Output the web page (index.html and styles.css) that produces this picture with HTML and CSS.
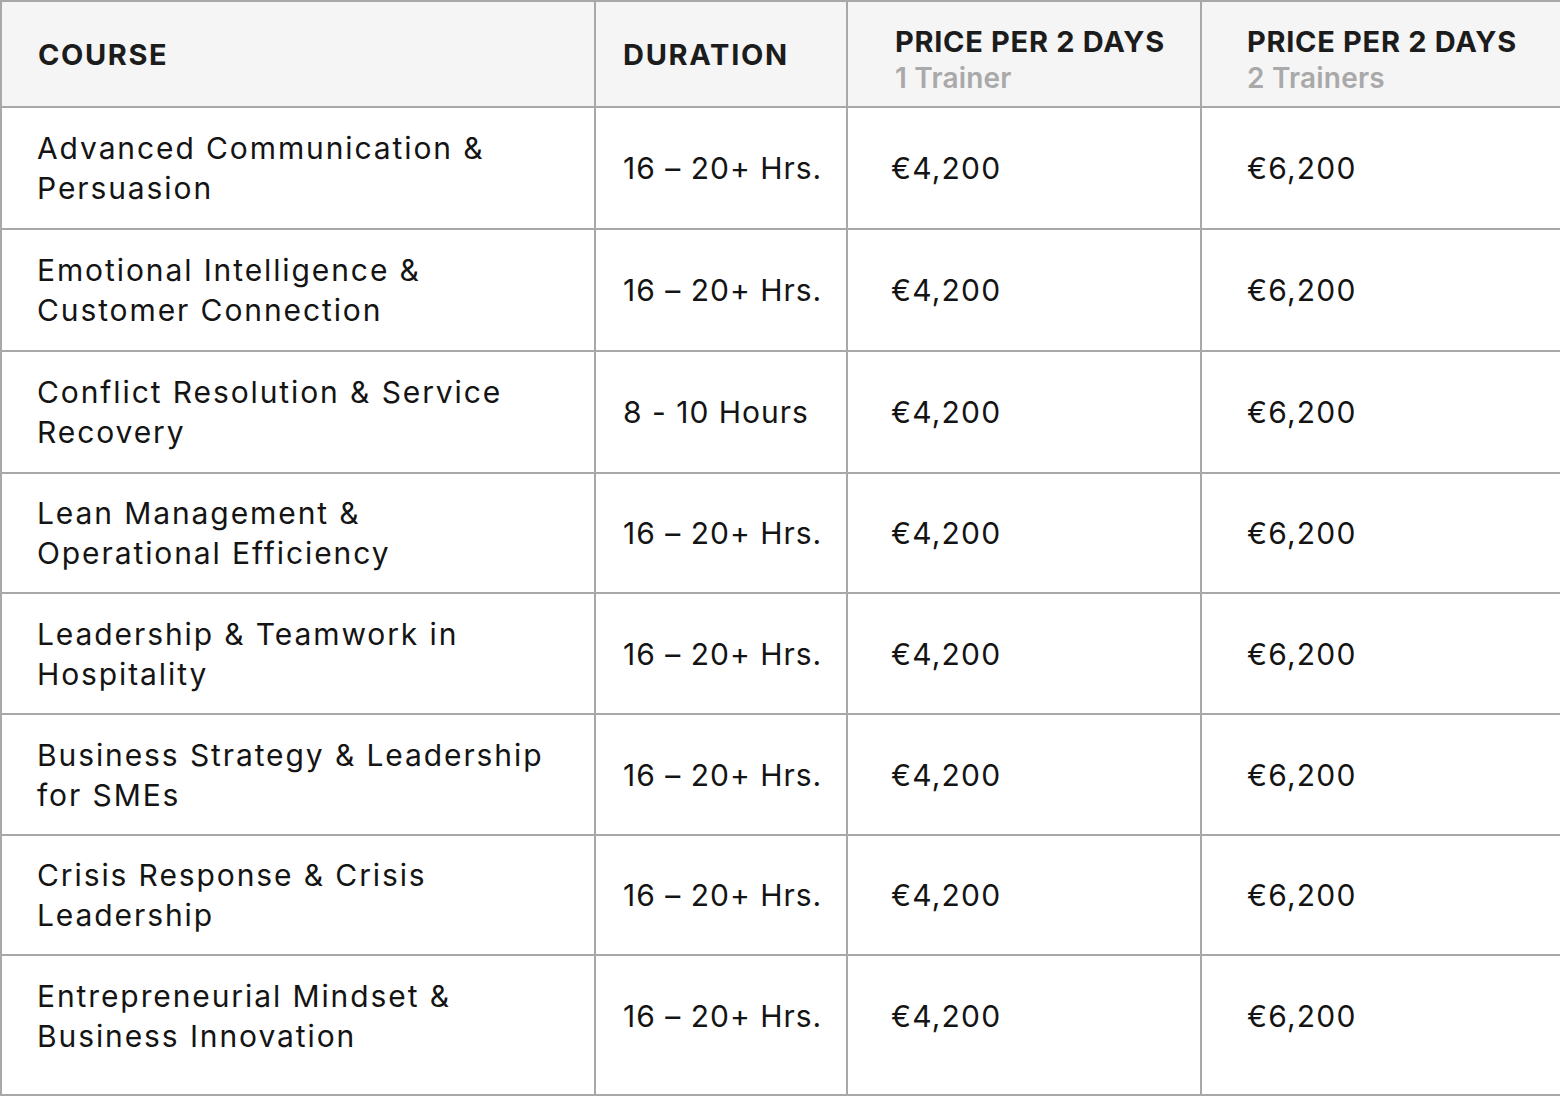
FILE: index.html
```html
<!DOCTYPE html>
<html lang="en">
<head>
<meta charset="utf-8">
<title>Course pricing</title>
<link rel="stylesheet" href="styles.css">
</head>
<body>
<table class="pricing">
  <colgroup>
    <col class="c-course">
    <col class="c-duration">
    <col class="c-price1">
    <col class="c-price2">
  </colgroup>
  <thead>
    <tr>
      <th class="course">COURSE</th>
      <th class="duration">DURATION</th>
      <th class="price1">PRICE PER 2 DAYS<span class="sub">1 Trainer</span></th>
      <th class="price2">PRICE PER 2 DAYS<span class="sub">2 Trainers</span></th>
    </tr>
  </thead>
  <tbody>
    <tr>
      <td class="course">Advanced Communication &amp;<br>Persuasion</td>
      <td class="duration">16 – 20+ Hrs.</td>
      <td class="price1">€4,200</td>
      <td class="price2">€6,200</td>
    </tr>
    <tr>
      <td class="course">Emotional Intelligence &amp;<br>Customer Connection</td>
      <td class="duration">16 – 20+ Hrs.</td>
      <td class="price1">€4,200</td>
      <td class="price2">€6,200</td>
    </tr>
    <tr>
      <td class="course">Conflict Resolution &amp; Service<br>Recovery</td>
      <td class="duration">8 - 10 Hours</td>
      <td class="price1">€4,200</td>
      <td class="price2">€6,200</td>
    </tr>
    <tr class="h120">
      <td class="course">Lean Management &amp;<br>Operational Efficiency</td>
      <td class="duration">16 – 20+ Hrs.</td>
      <td class="price1">€4,200</td>
      <td class="price2">€6,200</td>
    </tr>
    <tr class="h121">
      <td class="course">Leadership &amp; Teamwork in<br>Hospitality</td>
      <td class="duration">16 – 20+ Hrs.</td>
      <td class="price1">€4,200</td>
      <td class="price2">€6,200</td>
    </tr>
    <tr class="h121">
      <td class="course">Business Strategy &amp; Leadership<br>for SMEs</td>
      <td class="duration">16 – 20+ Hrs.</td>
      <td class="price1">€4,200</td>
      <td class="price2">€6,200</td>
    </tr>
    <tr class="h120">
      <td class="course">Crisis Response &amp; Crisis<br>Leadership</td>
      <td class="duration">16 – 20+ Hrs.</td>
      <td class="price1">€4,200</td>
      <td class="price2">€6,200</td>
    </tr>
    <tr class="last">
      <td class="course">Entrepreneurial Mindset &amp;<br>Business Innovation</td>
      <td class="duration">16 – 20+ Hrs.</td>
      <td class="price1">€4,200</td>
      <td class="price2">€6,200</td>
    </tr>
  </tbody>
</table>
</body>
</html>
```

FILE: styles.css
```css
html, body {
  margin: 0;
  padding: 0;
  background: #ffffff;
}

body {
  font-family: "Inter", "Open Sans", sans-serif;
  color: #151515;
}

.pricing {
  width: 1560px;
  border-collapse: collapse;
  table-layout: fixed;
  border: 2px solid #a8a8a8;
}

.c-course { width: 594px; }
.c-duration { width: 252px; }
.c-price1 { width: 354px; }
.c-price2 { width: 360px; }

.pricing th,
.pricing td {
  border: 2px solid #a8a8a8;
  text-align: left;
  vertical-align: middle;
  padding: 0;
}

.pricing th {
  background: #f5f5f5;
  height: 104px;
  font-size: 29px;
  font-weight: 700;
  line-height: 37px;
  letter-spacing: 0.7px;
  color: #1c1c1c;
}

.pricing th.course {
  letter-spacing: 1.6px;
}

.pricing th.duration {
  letter-spacing: 1.7px;
}

.pricing th.price1,
.pricing th.price2 {
  padding-top: 12px;
  height: 92px;
}

.pricing th .sub {
  display: block;
  font-size: 28px;
  font-weight: 600;
  letter-spacing: 0.2px;
  color: #a9a9a9;
}

.pricing td {
  height: 120px;
  font-size: 30px;
  line-height: 40px;
  font-weight: 400;
  color: #141414;
}

.pricing tr.h121 td { height: 119px; }
.pricing tr.h120 td { height: 118px; }

.pricing tr.last td {
  height: 120px;
  padding-bottom: 18px;
}

.pricing td.course { letter-spacing: 1.9px; }
.pricing td.duration { letter-spacing: 1px; }
.pricing td.price1,
.pricing td.price2 { letter-spacing: 1.2px; }

.pricing .course { padding-left: 36px; }
.pricing td.course { padding-left: 35px; }
.pricing .duration { padding-left: 27px; }
.pricing .price1 { padding-left: 43px; }
.pricing .price2 { padding-left: 45px; }

.pricing th.price1 { padding-left: 47px; }
.pricing th.price2 { padding-left: 45px; }
```
